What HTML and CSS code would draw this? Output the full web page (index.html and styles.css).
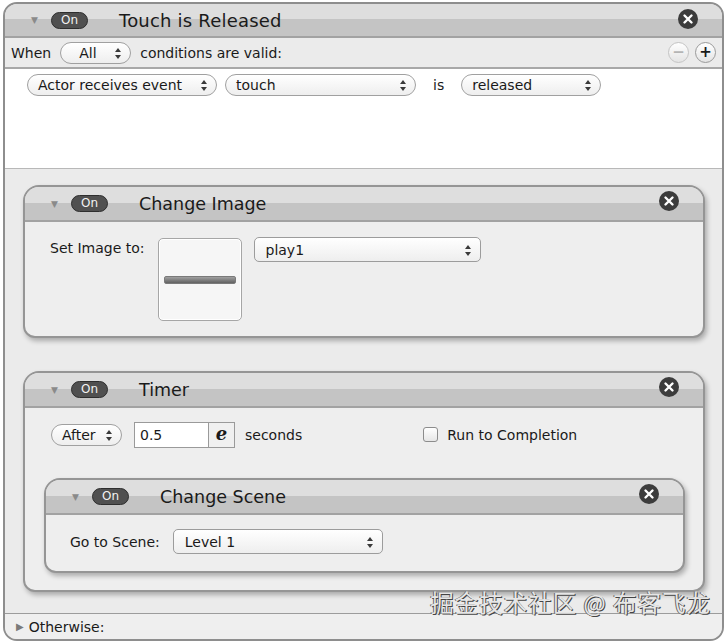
FILE: index.html
```
<!DOCTYPE html>
<html>
  <head>
    <meta charset="utf-8">
    <title>Touch is Released</title>
    <link rel="stylesheet" href="styles.css">
  </head>
  <body>
    <div class="rule">
      <header class="head head--rule">
        <span class="disclosure">&#9660;</span>
        <span class="toggle">On</span>
        <span class="head__title head__title--rule">Touch is Released</span>
        <span class="close"><svg viewBox="0 0 20 20" width="20" height="20"><circle cx="10" cy="10" r="10" fill="#3c3c3c"/><path d="M6.5 6.5l7 7M13.5 6.5l-7 7" stroke="#fff" stroke-width="2.4" stroke-linecap="round"/></svg></span>
      </header>

      <div class="when">
        <span>When</span>
        <span class="popup popup--all">All<i class="arrows"></i></span>
        <span>conditions are valid:</span>
        <span class="when__buttons">
          <span class="round round--off">&minus;</span>
          <span class="round">+</span>
        </span>
      </div>

      <div class="conditions">
        <div class="condition">
          <span class="popup popup--actor">Actor receives event<i class="arrows"></i></span>
          <span class="popup popup--touch">touch<i class="arrows"></i></span>
          <span class="condition__is">is</span>
          <span class="popup popup--released">released<i class="arrows"></i></span>
        </div>
      </div>

      <div class="actions">
        <section class="card card--image">
          <header class="head">
            <span class="disclosure">&#9660;</span>
            <span class="toggle">On</span>
            <span class="head__title">Change Image</span>
            <span class="close"><svg viewBox="0 0 20 20" width="20" height="20"><circle cx="10" cy="10" r="10" fill="#3c3c3c"/><path d="M6.5 6.5l7 7M13.5 6.5l-7 7" stroke="#fff" stroke-width="2.4" stroke-linecap="round"/></svg></span>
          </header>
          <div class="card__body card__body--image">
            <span class="label label--image">Set Image to:</span>
            <span class="thumb"><i class="thumb__bar"></i></span>
            <span class="select select--play">play1<i class="arrows"></i></span>
          </div>
        </section>

        <section class="card card--timer">
          <header class="head">
            <span class="disclosure">&#9660;</span>
            <span class="toggle">On</span>
            <span class="head__title">Timer</span>
            <span class="close"><svg viewBox="0 0 20 20" width="20" height="20"><circle cx="10" cy="10" r="10" fill="#3c3c3c"/><path d="M6.5 6.5l7 7M13.5 6.5l-7 7" stroke="#fff" stroke-width="2.4" stroke-linecap="round"/></svg></span>
          </header>
          <div class="card__body card__body--timer">
            <div class="timer-row">
              <span class="popup popup--after">After<i class="arrows"></i></span>
              <span class="field">
                <span class="field__value">0.5</span>
                <span class="field__e">e</span>
              </span>
              <span class="timer-row__unit">seconds</span>
              <label class="check"><i class="check__box"></i>Run to Completion</label>
            </div>

            <section class="card card--scene">
              <header class="head">
                <span class="disclosure">&#9660;</span>
                <span class="toggle">On</span>
                <span class="head__title">Change Scene</span>
                <span class="close"><svg viewBox="0 0 20 20" width="20" height="20"><circle cx="10" cy="10" r="10" fill="#3c3c3c"/><path d="M6.5 6.5l7 7M13.5 6.5l-7 7" stroke="#fff" stroke-width="2.4" stroke-linecap="round"/></svg></span>
              </header>
              <div class="card__body card__body--scene">
                <span class="label">Go to Scene:</span>
                <span class="select select--scene">Level 1<i class="arrows"></i></span>
              </div>
            </section>
          </div>
        </section>
      </div>

      <div class="otherwise">
        <span class="otherwise__arrow">&#9654;</span>
        Otherwise:
      </div>

      <div class="watermark">掘金技术社区 @ 布客飞龙</div>
    </div>
  </body>
</html>
```

FILE: styles.css
```
:root {
  --line: #8e8e8e;
  --panel: #ececec;
  --band-top: #dedede;
  --band-bottom: #c4c4c4;
  --ink: #1a1a1a;
}

body {
  margin: 0;
  background: #ffffff;
  font-family: 'DejaVu Sans', 'Noto Sans CJK SC', sans-serif;
  font-size: 14px;
  color: var(--ink);
}

.rule {
  position: relative;
  box-sizing: border-box;
  margin: 2px 4px 0 3px;
  height: 639px;
  border: 2px solid var(--line);
  border-radius: 14px;
  overflow: hidden;
  background: var(--panel);
  display: flex;
  flex-direction: column;
}

/* header bars */

.head {
  position: relative;
  display: flex;
  align-items: center;
  height: 33px;
  padding-left: 26px;
  background: linear-gradient(var(--band-top) 0, var(--band-top) 48%, var(--band-bottom) 48%);
  border-bottom: 2px solid #a2a2a2;
  flex-shrink: 0;
}

.disclosure {
  color: #8a8a8a;
  font-size: 9px;
  width: 20px;
}

.toggle {
  box-sizing: border-box;
  width: 37px;
  height: 17px;
  border-radius: 9px;
  background: #505050;
  border: 1px solid #2e2e2e;
  color: #f2f2f2;
  font-size: 12px;
  line-height: 15px;
  text-align: center;
}

.head__title {
  margin-left: 31px;
  font-size: 17.5px;
}

.head__title--rule {
  font-size: 18px;
  letter-spacing: .2px;
}

.close {
  position: absolute;
  right: 24px;
  top: 4px;
  width: 20px;
  height: 20px;
}

.close svg {
  display: block;
}

.head--rule {
  height: 32px;
}

.head--rule .close {
  right: 24px;
  top: 5px;
}

/* when row */

.when {
  display: flex;
  align-items: center;
  height: 29px;
  padding: 0 6px;
  gap: 9px;
  background: #ebebeb;
  border-bottom: 2px solid #a8a8a8;
  flex-shrink: 0;
}

.when__buttons {
  margin-left: auto;
  display: flex;
  gap: 6px;
}

.round {
  box-sizing: border-box;
  width: 21px;
  height: 21px;
  border-radius: 50%;
  border: 1px solid #9a9a9a;
  background: linear-gradient(#ffffff, #e4e4e4);
  font-size: 15px;
  line-height: 18px;
  text-align: center;
  font-weight: bold;
}

.round--off {
  color: #b4b4b4;
  border-color: #c4c4c4;
}

/* popups */

.popup,
.select {
  position: relative;
  box-sizing: border-box;
  display: inline-flex;
  align-items: center;
  height: 22px;
  padding: 0 10px;
  border: 1px solid #a0a0a0;
  border-radius: 11px;
  background: linear-gradient(#ffffff, #eeeeee);
}

.select {
  height: 25px;
  border-radius: 5px;
  border-color: #9c9c9c;
  padding-left: 11px;
}

.arrows {
  position: absolute;
  right: 9px;
  top: 50%;
  margin-top: -5px;
  width: 6px;
  height: 11px;
}

.arrows::before,
.arrows::after {
  content: '';
  position: absolute;
  left: 0;
  border-left: 3px solid transparent;
  border-right: 3px solid transparent;
}

.arrows::before {
  top: 0;
  border-bottom: 4px solid #3a3a3a;
}

.arrows::after {
  bottom: 0;
  border-top: 4px solid #3a3a3a;
}

.popup--all {
  width: 71px;
  padding-left: 18px;
}

.conditions {
  height: 99px;
  background: #ffffff;
  border-bottom: 1px solid #b8b8b8;
  flex-shrink: 0;
}

.condition {
  display: flex;
  align-items: center;
  padding: 5px 0 0 22px;
}

.popup--actor {
  width: 190px;
}

.popup--touch {
  width: 191px;
  margin-left: 8px;
}

.condition__is {
  margin: 0 17px 0 17px;
}

.popup--released {
  width: 140px;
}

/* action cards */

.actions {
  flex: 1;
  padding: 16px 17px 0 18px;
  display: flex;
  flex-direction: column;
  gap: 33px;
  background: #ebebeb;
}

.card {
  border: 2px solid #959595;
  border-radius: 16px 16px 12px 12px;
  overflow: hidden;
  background: #eeeeee;
  box-shadow: 2px 3px 5px rgba(0, 0, 0, .28);
}

.card--image {
  height: 153px;
  box-sizing: border-box;
}

.card__body--image {
  display: flex;
  align-items: flex-start;
  padding: 15px 0 0 25px;
}

.label {
  white-space: nowrap;
}

.label--image {
  margin-top: 3px;
}

.thumb {
  box-sizing: border-box;
  display: flex;
  align-items: center;
  justify-content: center;
  width: 84px;
  height: 83px;
  margin: 1px 0 0 13px;
  border: 1px solid #a6a6a6;
  border-radius: 5px;
  background: #f6f6f6;
  box-shadow: 0 0 0 1px #ffffff inset;
}

.thumb__bar {
  width: 70px;
  height: 6px;
  border-radius: 2px;
  background: linear-gradient(#a0a0a0, #626262);
  border: 1px solid #7a7a7a;
}

.select--play {
  width: 227px;
  margin-left: 12px;
}

.card--timer {
  box-sizing: border-box;
  height: 221px;
}

.card__body--timer {
  padding: 13px 18px 0 19px;
}

.timer-row {
  display: flex;
  align-items: center;
  height: 27px;
  margin-left: 7px;
}

.popup--after {
  width: 71px;
  padding-left: 10px;
}

.field {
  display: flex;
  box-sizing: border-box;
  height: 26px;
  margin-left: 12px;
  border: 1px solid #9a9a9a;
  background: #ffffff;
}

.field__value {
  width: 73px;
  padding-left: 5px;
  line-height: 24px;
  box-sizing: border-box;
}

.field__e {
  width: 25px;
  border-left: 1px solid #9a9a9a;
  background: #f0f0f0;
  font-family: 'DejaVu Serif', serif;
  font-style: italic;
  font-weight: bold;
  font-size: 18px;
  line-height: 22px;
  text-align: center;
}

.timer-row__unit {
  margin-left: 10px;
}

.check {
  display: flex;
  align-items: center;
  margin-left: 121px;
}

.check__box {
  box-sizing: border-box;
  width: 15px;
  height: 15px;
  margin-right: 9px;
  border: 1px solid #8c8c8c;
  border-radius: 3px;
  background: linear-gradient(#ffffff, #e6e6e6);
}

.card--scene {
  margin-top: 30px;
  height: 95px;
  box-sizing: border-box;
}

.card__body--scene {
  display: flex;
  align-items: center;
  gap: 13px;
  padding: 14px 0 0 24px;
}

.select--scene {
  width: 210px;
}

/* otherwise row */

.otherwise {
  display: flex;
  align-items: center;
  height: 25px;
  padding-left: 11px;
  border-top: 1px solid #9c9c9c;
  background: #efefef;
  flex-shrink: 0;
}

.otherwise__arrow {
  color: #7a7a7a;
  font-size: 10px;
  margin-right: 5px;
}

.watermark {
  position: absolute;
  right: 11px;
  bottom: 20px;
  font-family: 'Noto Sans CJK SC', sans-serif;
  font-size: 23.5px;
  color: #e6e6e6;
  text-shadow: 1px 1px 0 #444, -1px 0 0 #666;
  letter-spacing: 1px;
}
```
